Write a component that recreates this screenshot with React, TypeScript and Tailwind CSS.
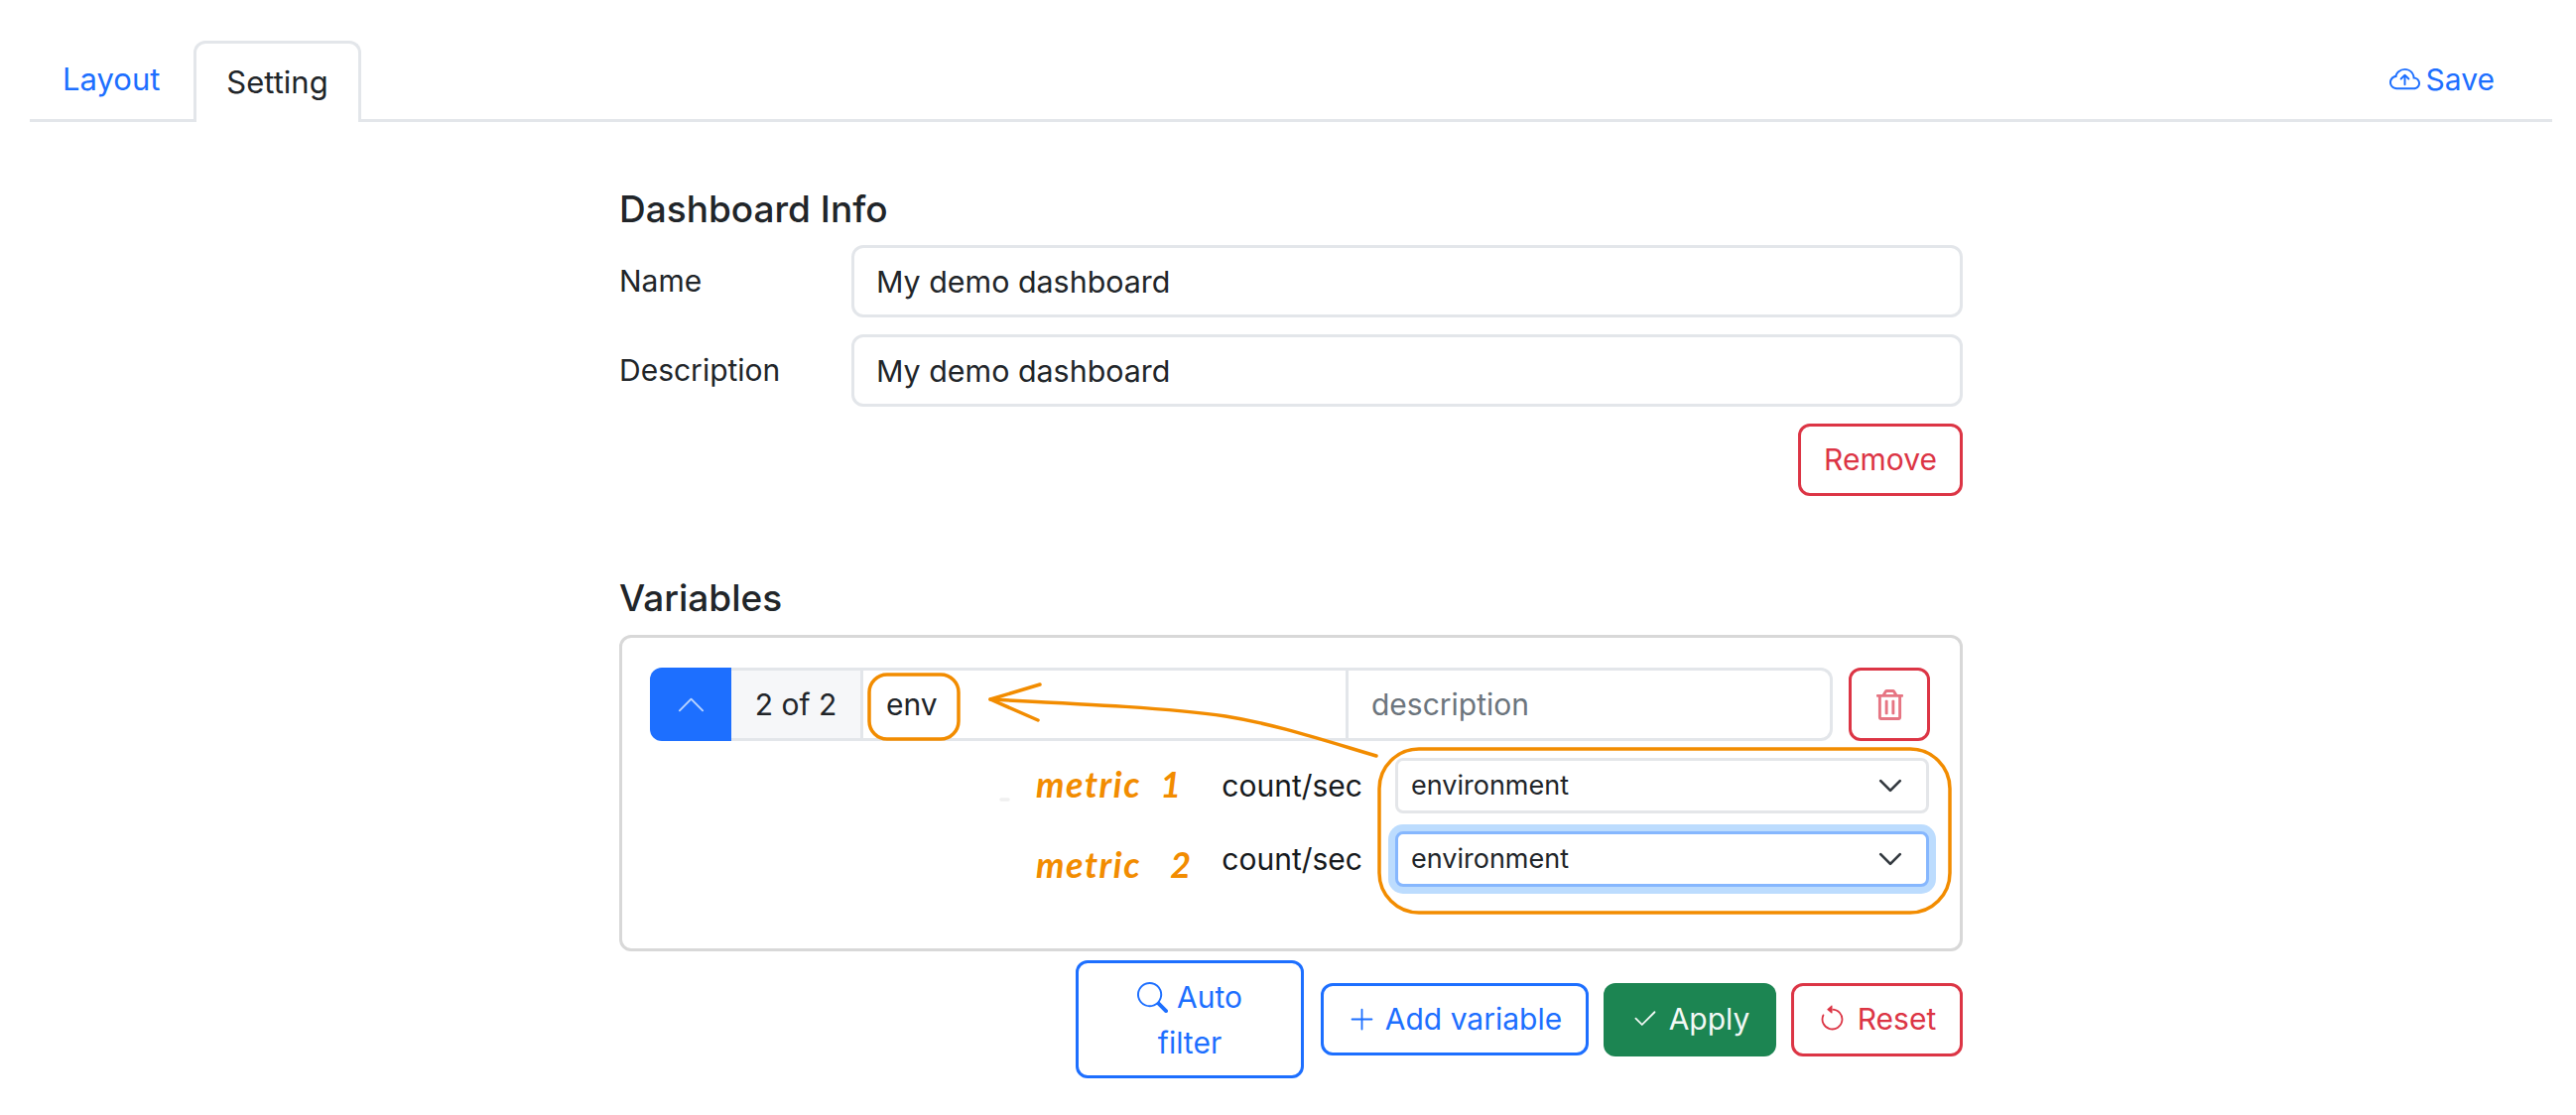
import React from "react";
import {
  BsCloudArrowUp,
  BsChevronUp,
  BsSearch,
  BsPlusLg,
  BsCheck2,
  BsArrowCounterclockwise,
} from "react-icons/bs";
import { FaRegTrashAlt } from "react-icons/fa";

function MetricSelect({ focused }: { focused?: boolean }) {
  return (
    <div className="relative w-[538px] h-[56px]">
      <select
        defaultValue="environment"
        className={
          "appearance-none w-full h-full bg-white rounded-[8px] border-[3px] pl-[13px] text-[27px] text-[#212529] outline-none " +
          (focused
            ? "border-[#86b7fe] shadow-[0_0_0_7px_#bcdcfe]"
            : "border-[#e4e6e9]")
        }
      >
        <option>environment</option>
      </select>
      <svg
        viewBox="0 0 16 16"
        className="absolute right-[26px] top-[15px] w-[26px] h-[26px] pointer-events-none"
        fill="none"
        stroke="#343a40"
        strokeWidth="1.7"
        strokeLinecap="round"
        strokeLinejoin="round"
      >
        <path d="m2 5 6 6 6-6" />
      </svg>
    </div>
  );
}

function MetricRow({ focused }: { focused?: boolean }) {
  return (
    <div className="flex items-center justify-end gap-[33px] pr-px">
      <span className="text-[30px] text-[#16191c]">count/sec</span>
      <MetricSelect focused={focused} />
    </div>
  );
}

function InfoRow({ label }: { label: string }) {
  return (
    <div className="flex items-center">
      <label className="w-[234px] text-[30px] text-[#212529]">{label}</label>
      <input
        readOnly
        value="My demo dashboard"
        className="flex-1 h-[73px] rounded-[12px] border-[3px] border-[#e3e6ea] px-[22px] text-[30.4px] text-[#212529] outline-none"
      />
    </div>
  );
}

export default function App() {
  return (
    <div
      className="relative w-[2596px] h-[1124px] overflow-hidden bg-white text-[#212529]"
      style={{ fontFamily: "Inter, 'Liberation Sans', sans-serif" }}
    >
      <header className="pt-[41px] pl-[30px] pr-[24px]">
        <div className="flex items-end h-[82px] border-b-[3px] border-[#e3e6ea]">
          <a className="w-[165px] pl-[33px] h-[79px] flex items-center text-[31px] text-[#1d6fff]">
            Layout
          </a>
          <a className="w-[169px] h-[82px] -mb-[3px] flex items-center justify-center bg-white border-[3px] border-b-0 border-[#e3e6ea] rounded-t-[12px] text-[31px] text-[#212529]">
            Setting
          </a>
          <a className="ml-auto mr-[58px] h-[79px] flex items-center gap-[6px] text-[30px] text-[#1d6fff]">
            <BsCloudArrowUp className="w-[31px] h-[31px]" />
            Save
          </a>
        </div>
      </header>

      <main className="ml-[624px] w-[1354px]">
        <h3 className="mt-[68px] h-[40px] leading-[40px] text-[37px] font-medium text-[#212529]">
          Dashboard Info
        </h3>
        <div className="mt-[16px] flex flex-col gap-[17px]">
          <InfoRow label="Name" />
          <InfoRow label="Description" />
          <div className="flex justify-end">
            <button className="w-[166px] h-[73px] rounded-[12px] border-[3px] border-[#dc3545] text-[30px] text-[#dc3545]">
              Remove
            </button>
          </div>
        </div>

        <h3 className="mt-[83px] h-[40px] leading-[40px] text-[37px] font-medium text-[#212529]">
          Variables
        </h3>
        <section className="mt-[17px] h-[319px] rounded-[12px] border-[3px] border-[#d8d8d8] pt-[30px] pl-[28px] pr-[30px]">
          <div className="flex items-stretch h-[74px]">
            <button className="w-[82px] flex items-center justify-center bg-[#1d6fff] rounded-l-[12px] text-[#b9d4ff]">
              <BsChevronUp className="w-[31px] h-[31px]" />
            </button>
            <span className="w-[133px] flex items-center justify-center bg-[#f6f7f9] border-y-[3px] border-r-[3px] border-[#e3e6ea] text-[30px] text-[#212529]">
              2 of 2
            </span>
            <input
              readOnly
              value="env"
              className="w-[489px] border-y-[3px] border-r-[3px] border-[#e3e6ea] pl-[23px] text-[30px] text-[#212529] outline-none"
            />
            <input
              readOnly
              placeholder="description"
              className="w-[488px] border-y-[3px] border-r-[3px] border-[#e3e6ea] rounded-r-[12px] pl-[23px] text-[30px] text-[#212529] placeholder:text-[#6c757d] outline-none"
            />
            <button className="ml-[16px] w-[82px] flex items-center justify-center rounded-[12px] border-[3px] border-[#dc3545]">
              <FaRegTrashAlt className="w-[27px] h-[31px] text-[#e67583]" />
            </button>
          </div>
          <div className="mt-[17px] flex flex-col gap-[18px]">
            <MetricRow />
            <MetricRow focused />
          </div>
        </section>

        <div className="mt-[9px] flex items-center justify-end">
          <button className="w-[230px] h-[119px] rounded-[12px] border-[3px] border-[#1d6fff] px-[34px] text-[30px] leading-[46px] text-[#1d6fff]">
            <BsSearch className="inline-block w-[31px] h-[31px] mr-[9px] -mt-[4px]" />
            Auto filter
          </button>
          <button className="ml-[17px] w-[270px] h-[73px] flex items-center justify-center gap-[9px] rounded-[12px] border-[3px] border-[#1d6fff] text-[30px] text-[#1d6fff]">
            <BsPlusLg className="w-[29px] h-[29px]" />
            Add variable
          </button>
          <button className="ml-[15px] w-[174px] h-[74px] flex items-center justify-center gap-[10px] rounded-[12px] bg-[#1c8552] text-[30px] text-[#f2f8f5]">
            <BsCheck2 className="w-[29px] h-[29px]" />
            Apply
          </button>
          <button className="ml-[15px] w-[173px] h-[74px] flex items-center justify-center gap-[11px] rounded-[12px] border-[3px] border-[#dc3545] text-[30px] text-[#dc3545]">
            <BsArrowCounterclockwise className="w-[29px] h-[29px]" />
            Reset
          </button>
        </div>
      </main>

      {/* Hand-drawn annotation layer lying over the form */}
      <svg
        viewBox="0 0 2596 1124"
        className="absolute inset-0 w-[2596px] h-[1124px] pointer-events-none"
        fill="none"
        stroke="#f28c00"
        strokeWidth="3.5"
        strokeLinecap="round"
        strokeLinejoin="round"
      >
        <rect x="876" y="680" width="90" height="65" rx="18" />
        <rect x="1390" y="755" width="575" height="165" rx="40" />
        <path d="M1387 762 C1330 745 1285 730 1235 722 C1180 714 1100 710 998 705" />
        <path d="M1048 690 L998 705 L1046 726" />
        <path d="M1009 806 L1016 806" stroke="#f0f0f0" />
      </svg>
      <span
        className="absolute left-[1044px] top-[770px] text-[36px] font-bold italic tracking-[1.5px] [word-spacing:10px] leading-[40px] text-[#f28c00] whitespace-pre"
        style={{ fontFamily: "Lato, sans-serif" }}
      >
        metric 1
      </span>
      <span
        className="absolute left-[1044px] top-[851px] text-[36px] font-bold italic tracking-[1.5px] [word-spacing:20px] leading-[40px] text-[#f28c00] whitespace-pre"
        style={{ fontFamily: "Lato, sans-serif" }}
      >
        metric 2
      </span>
    </div>
  );
}
